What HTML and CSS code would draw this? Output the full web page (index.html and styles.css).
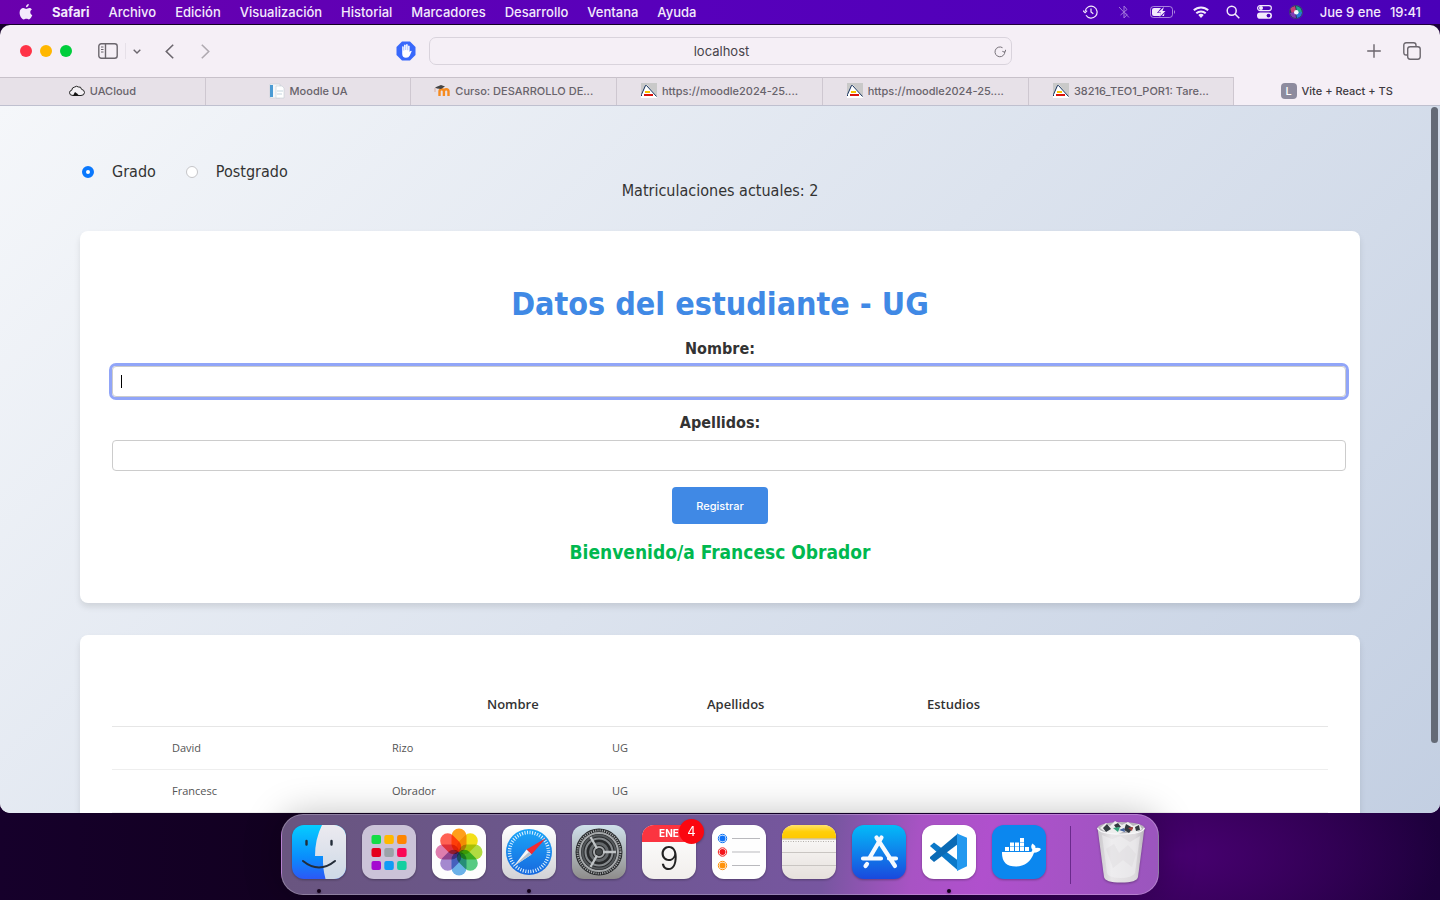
FILE: index.html
```html
<!DOCTYPE html>
<html lang="es">
<head>
<meta charset="utf-8">
<meta name="viewport" content="width=device-width, initial-scale=1">
<title>Vite + React + TS</title>
<link rel="stylesheet" href="styles.css">
</head>
<body class="desktop">
<svg class="defs" aria-hidden="true">
  <defs>
    <linearGradient id="finderBlue" x1="0" y1="0" x2="0" y2="1"><stop offset="0" stop-color="#05cdff"/><stop offset=".6" stop-color="#0a8dfc"/><stop offset="1" stop-color="#2c58f5"/></linearGradient>
    <linearGradient id="finderWhite" x1="0" y1="0" x2="0" y2="1"><stop offset="0" stop-color="#eceaf0"/><stop offset="1" stop-color="#cdd9e6"/></linearGradient>
    <linearGradient id="silver" x1="0" y1="0" x2="0" y2="1"><stop offset="0" stop-color="#fff"/><stop offset="1" stop-color="#d2d2d6"/></linearGradient>
    <linearGradient id="compass" x1="0" y1="0" x2="0" y2="1"><stop offset="0" stop-color="#1ba5f8"/><stop offset="1" stop-color="#1769df"/></linearGradient>
    <linearGradient id="prefs" x1="0" y1="0" x2="0" y2="1"><stop offset="0" stop-color="#cfe0ea"/><stop offset="1" stop-color="#8e8c8b"/></linearGradient>
    <linearGradient id="paper" x1="0" y1="0" x2="0" y2="1"><stop offset="0" stop-color="#fff"/><stop offset="1" stop-color="#e6e0dc"/></linearGradient>
    <linearGradient id="noteTop" x1="0" y1="0" x2="0" y2="1"><stop offset="0" stop-color="#ffe06a"/><stop offset=".5" stop-color="#ffcf08"/><stop offset="1" stop-color="#ffc800"/></linearGradient>
    <linearGradient id="store" x1="0" y1="0" x2="0" y2="1"><stop offset="0" stop-color="#03bbf8"/><stop offset="1" stop-color="#1a49dd"/></linearGradient>
    <linearGradient id="bin" x1="0" y1="0" x2="1" y2="0"><stop offset="0" stop-color="#c9c7cb"/><stop offset=".3" stop-color="#e8e6e8"/><stop offset=".8" stop-color="#dddadd"/><stop offset="1" stop-color="#b9b6bc"/></linearGradient>
    <clipPath id="tile"><rect width="54" height="54" rx="12"/></clipPath>
    <clipPath id="orb"><circle cx="7" cy="7" r="6.500"/></clipPath>
    <symbol id="ua" viewBox="0 0 16 16"><path fill="#c9c9c9" d="M0 0h16v15H0z"/><path fill="#fff" d="M5 2h1l10 12v1H0v-3z"/><path fill="none" stroke="#14305c" d="M.5 13V11.500L4.500 2.500H5.500L15.500 13.500"/><path fill="#f7c400" d="M4 8h5v2H4z"/><path fill="#d9140e" d="M3 11h9v2H3z"/></symbol>
  </defs>
</svg>

<header class="menubar">
  <nav class="menus" aria-label="Barra de menús">
    <button class="menu apple" aria-label="Apple"><svg width="14" height="16" viewBox="0 0 14 16"><path fill="currentColor" d="M9.800 0c.1 1.600-1.200 3.200-2.800 3.200C6.800 1.700 8.200.2 9.800 0zM12.900 5.600c-1 .6-1.600 1.500-1.600 2.600 0 1.300.8 2.400 2 2.900-.5 1.700-1.900 4.200-3.300 4.300-1 0-1.400-.6-2.600-.6s-1.700.6-2.600.6C2.900 15.500.6 11.700.6 8.700c0-3 1.900-4.600 3.700-4.600 1.200 0 2.200.8 2.900.8.700 0 1.800-.9 3.300-.9 1 0 1.900.6 2.400 1.600z"/></svg></button>
    <button class="menu app">Safari</button>
    <button class="menu">Archivo</button>
    <button class="menu">Edición</button>
    <button class="menu">Visualización</button>
    <button class="menu">Historial</button>
    <button class="menu">Marcadores</button>
    <button class="menu">Desarrollo</button>
    <button class="menu">Ventana</button>
    <button class="menu">Ayuda</button>
  </nav>
  <div class="status">
    <svg width="15" height="14" viewBox="0 0 15 14" fill="none" stroke="currentColor" stroke-width="1.200"><path d="M2.200 6A6 6 0 1 1 3 10.300M0 5.600l2.100 2 2-2M8 3.500V7l2.300 1.800"/></svg>
    <svg class="faint" width="18" height="14" viewBox="-3 0 18 14" fill="none" stroke="currentColor"><path d="M2.500 10L9 4.500 6 1v12l3-3.300-2-2M1 2l10 10.500"/></svg>
    <svg width="26" height="12" viewBox="0 0 26 12"><rect x=".5" y=".5" width="22" height="11" rx="3" fill="none" stroke="currentColor" opacity=".55"/><path fill="currentColor" opacity=".6" d="M24 4q2 2 0 4z"/><path fill="currentColor" d="M4 2h7L7 7h4l-1 3H4q-2 0-2-2V4q0-2 2-2zM14 1L8 6.500h3L9.500 11l6-6h-3zM14.500 7L12 10h2z"/></svg>
    <svg width="16" height="12" viewBox="0 0 16 12" fill="none" stroke="currentColor" stroke-width="2"><path d="M.8 4.300a10.500 10.500 0 0 1 14.400 0M3.300 7.200a7 7 0 0 1 9.400 0"/><path fill="currentColor" stroke="none" d="M5.300 9a4 4 0 0 1 5.400 0L8 12z"/></svg>
    <svg width="14" height="14" viewBox="0 0 14 14" fill="none" stroke="currentColor" stroke-width="1.500"><circle cx="5.700" cy="5.700" r="4.500"/><path d="M9 9l4.300 4.300"/></svg>
    <svg width="15" height="14" viewBox="0 0 15 14"><rect x=".6" y=".6" width="13.800" height="5" rx="2.500" fill="none" stroke="currentColor" stroke-width="1.200"/><circle cx="4" cy="3.100" r="2" fill="currentColor"/><rect y="7.500" width="15" height="6.300" rx="3.100" fill="currentColor"/><circle cx="11.500" cy="10.600" r="1.900" fill="#4c00b8"/></svg>
    <svg width="14" height="14" viewBox="0 0 14 14"><circle cx="7" cy="7" r="7" fill="#4a4584"/><g clip-path="url(#orb)"><path fill="#23345f" d="M0 0h14v14H0z"/><path fill="#c93c78" d="M1 3l5-2 1 5-4 3z"/><path fill="#1fa38e" d="M7 1q6 1 6 7l-5-1z"/><path fill="#2879d8" d="M13 7q0 5-5 6l-1-5z"/><path fill="#7d3bb5" d="M1 8l5-1 1 6q-5 0-6-5z"/></g><circle cx="7.300" cy="7.300" r="2.300" fill="#f0fbff"/></svg>
    <time class="clock"><span>Jue 9 ene</span><span>19:41</span></time>
  </div>
</header>

<section class="window" aria-label="Safari">
  <div class="toolbar">
    <div class="tools">
      <div class="lights"><button class="light red" aria-label="Cerrar"></button><button class="light amber" aria-label="Minimizar"></button><button class="light green" aria-label="Ampliar"></button></div>
      <div class="sidebar-tools">
        <button class="icon" aria-label="Barra lateral"><svg width="20" height="16" viewBox="0 0 20 16" fill="none" stroke="currentColor" stroke-width="1.400"><rect x=".8" y=".8" width="18.400" height="14.400" rx="2.500"/><path d="M7.500 1v14"/><path stroke-width="1" d="M3 4h2.500M3 6.500h2.500M3 9h2.500"/></svg></button>
        <button class="icon split" aria-label="Grupos de pestañas"><svg width="8" height="5" viewBox="0 0 8 5" fill="none" stroke="currentColor" stroke-width="1.400"><path d="M.7.700L4 4 7.300.700"/></svg></button>
      </div>
      <div class="history">
        <button class="icon" aria-label="Atrás"><svg width="9" height="15" viewBox="0 0 9 15" fill="none" stroke="currentColor" stroke-width="1.600"><path d="M8.200.8L1.300 7.500l6.900 6.700"/></svg></button>
        <button class="icon faint" aria-label="Adelante"><svg width="9" height="15" viewBox="0 0 9 15" fill="none" stroke="currentColor" stroke-width="1.600"><path d="M.8.800l6.900 6.700-6.900 6.700"/></svg></button>
      </div>
    </div>
    <div class="address-area">
      <button class="icon" aria-label="Bloqueador"><svg width="20" height="20" viewBox="0 0 20 20"><path fill="#3868fb" d="M6 .5h8L19.500 6v8L14 19.500H6L.5 14V6z"/><path fill="#fff" d="M6.200 5.500q.9-.8 1.500.2V9.500h.4V4q.8-1.200 1.600 0v5h.4V3.500q.8-1.200 1.600 0V9.200h.4V5q.8-1 1.500 0v6l.8-1q1-.6 1.300.2L13.800 14.500q-1 2.200-3.800 2.200-3.800 0-3.800-4z"/></svg></button>
      <div class="address">
        <input class="url" type="text" value="localhost" aria-label="Dirección">
        <button class="reload" aria-label="Recargar"><svg width="12" height="13" viewBox="0 0 12 13" fill="none" stroke="#77727a"><path d="M10.800 6.500A4.900 4.900 0 1 1 8.500 2.700M8.300 6.300l2.500 1 1-2.600"/></svg></button>
      </div>
    </div>
    <div class="actions">
      <button class="icon" aria-label="Nueva pestaña"><svg width="14" height="14" viewBox="0 0 14 14" fill="none" stroke="currentColor" stroke-width="1.400"><path d="M7 .2v13.600M.2 7h13.600"/></svg></button>
      <button class="icon" aria-label="Vista de pestañas"><svg width="18" height="18" viewBox="0 0 18 18" fill="none" stroke="currentColor" stroke-width="1.400"><path d="M4.300 13H3.200Q.8 13 .8 10.600V3.200Q.8.800 3.200.800h7.400Q13 .8 13 3.200v1.100"/><rect x="4.700" y="4.700" width="12.500" height="12.500" rx="2.400"/></svg></button>
    </div>
  </div>

  <div class="tabs" role="tablist">
    <button class="tab" role="tab"><svg width="16" height="16" viewBox="0 0 16 16"><path fill="#fff" fill-opacity=".5" stroke="#222" d="M4 12.500q-3.500 0-3.500-2.700 0-2.300 2.200-2.500.2-3 3-3.300Q7.500 2.500 9.500 4q2.500-.7 3 2.300 2.800.4 3 3.200-.2 3-3.500 3z"/><path fill="#111" d="M4 12.500L6 9l2 1.500 2 2z"/></svg><span>UACloud</span></button>
    <button class="tab" role="tab"><svg width="16" height="16" viewBox="0 0 16 16"><path fill="#f5f7f9" stroke="#c5cdd4" stroke-width=".6" d="M1 1h10v14H1z"/><path fill="#4a9bd4" d="M1 2h3v12H1z"/><path fill="#fff" stroke="#c5cdd4" stroke-width=".6" d="M7 3h6l2 2v10H7z"/><path stroke="#c5d5df" d="M8 8h6M8 11h5"/></svg><span>Moodle UA</span></button>
    <button class="tab" role="tab"><svg width="16" height="16" viewBox="0 0 16 16"><path fill="none" stroke="#f68b1f" stroke-width="2.400" d="M5.500 13V8.500q0-2.300 2.200-2.300t2.200 2.300V13M9.900 8.500q0-2.300 2.300-2.300t2.300 2.300V13"/><path fill="#444" d="M1 4.500L7 2l4 1.500-4 2.500-4-.5z"/><path stroke="#d9a08a" stroke-width=".8" d="M1 5v4"/></svg><span>Curso: DESARROLLO DE...</span></button>
    <button class="tab" role="tab"><svg width="16" height="16"><use href="#ua"/></svg><span>https://moodle2024-25....</span></button>
    <button class="tab" role="tab"><svg width="16" height="16"><use href="#ua"/></svg><span>https://moodle2024-25....</span></button>
    <button class="tab" role="tab"><svg width="16" height="16"><use href="#ua"/></svg><span>38216_TEO1_POR1: Tare...</span></button>
    <button class="tab current" role="tab" aria-selected="true"><i class="letter">L</i><span>Vite + React + TS</span></button>
  </div>

  <div class="viewport">
    <main class="page">
      <div class="studies" role="radiogroup" aria-label="Estudios">
        <label class="study"><input class="radio" type="radio" name="estudios" checked><span>Grado</span></label>
        <label class="study"><input class="radio" type="radio" name="estudios"><span>Postgrado</span></label>
      </div>
      <p class="count">Matriculaciones actuales: 2</p>

      <form class="card form">
        <h1 class="title">Datos del estudiante - UG</h1>
        <label class="label" for="nombre">Nombre:</label>
        <input class="field active" id="nombre" type="text">
        <label class="label" for="apellidos">Apellidos:</label>
        <input class="field" id="apellidos" type="text">
        <button class="submit" type="button">Registrar</button>
        <p class="welcome">Bienvenido/a Francesc Obrador</p>
      </form>

      <div class="card">
        <table class="students">
          <thead><tr><th>Nombre</th><th>Apellidos</th><th>Estudios</th></tr></thead>
          <tbody>
            <tr><td>David</td><td>Rizo</td><td>UG</td></tr>
            <tr><td>Francesc</td><td>Obrador</td><td>UG</td></tr>
          </tbody>
        </table>
      </div>
    </main>
    <div class="scrollbar"></div>
  </div>
</section>

<footer class="dock-area">
  <nav class="dock" aria-label="Dock">
    <button class="dock-item running" aria-label="Finder"><svg width="54" height="54" viewBox="0 0 54 54"><g clip-path="url(#tile)"><path fill="url(#finderBlue)" d="M0 0h54v54H0z"/><path fill="url(#finderWhite)" d="M30 0Q23 14 23 31h8q-.5 12 2.500 23H54V0z"/></g><path stroke="#222c38" stroke-width="2.400" stroke-linecap="round" d="M14.500 16v3.500M39.500 16v3.500"/><path fill="none" stroke="#222c38" stroke-width="2" stroke-linecap="round" d="M11 36q16 13 32 0"/></svg></button>
    <button class="dock-item" aria-label="Launchpad"><svg width="54" height="54" viewBox="0 0 54 54"><rect width="54" height="54" rx="12" fill="#cbc3d8"/><g><rect x="9.500" y="10" width="9.500" height="9" rx="2" fill="#14dc46"/><rect x="22.300" y="10" width="9.500" height="9" rx="2" fill="#ffb800"/><rect x="35.100" y="10" width="9.500" height="9" rx="2" fill="#ff8500"/><rect x="9.500" y="23" width="9.500" height="9" rx="2" fill="#e4001c"/><rect x="22.300" y="23" width="9.500" height="9" rx="2" fill="#9ba2a8"/><rect x="35.100" y="23" width="9.500" height="9" rx="2" fill="#fa0756"/><rect x="9.500" y="36" width="9.500" height="9" rx="2" fill="#a40bd0"/><rect x="22.300" y="36" width="9.500" height="9" rx="2" fill="#119bf5"/><rect x="35.100" y="36" width="9.500" height="9" rx="2" fill="#15cfa0"/></g></svg></button>
    <button class="dock-item" aria-label="Fotos"><svg width="54" height="54" viewBox="0 0 54 54"><rect width="54" height="54" rx="12" fill="#fdfdfd"/><g class="petals"><rect x="19.500" y="3.500" width="15" height="23.500" rx="7.500" fill="#ff9500"/><rect x="19.500" y="3.500" width="15" height="23.500" rx="7.500" fill="#f2dc00" transform="rotate(45 27 27)"/><rect x="19.500" y="3.500" width="15" height="23.500" rx="7.500" fill="#a9d72c" transform="rotate(90 27 27)"/><rect x="19.500" y="3.500" width="15" height="23.500" rx="7.500" fill="#44c574" transform="rotate(135 27 27)"/><rect x="19.500" y="3.500" width="15" height="23.500" rx="7.500" fill="#5aa9e6" transform="rotate(180 27 27)"/><rect x="19.500" y="3.500" width="15" height="23.500" rx="7.500" fill="#9a7cca" transform="rotate(225 27 27)"/><rect x="19.500" y="3.500" width="15" height="23.500" rx="7.500" fill="#dc6fa5" transform="rotate(270 27 27)"/><rect x="19.500" y="3.500" width="15" height="23.500" rx="7.500" fill="#ff5040" transform="rotate(315 27 27)"/></g></svg></button>
    <button class="dock-item running" aria-label="Safari"><svg width="54" height="54" viewBox="0 0 54 54"><rect width="54" height="54" rx="12" fill="url(#silver)"/><circle cx="27" cy="27" r="23" fill="url(#compass)"/><circle cx="27" cy="27" r="19.500" fill="none" stroke="#e0f3ff" stroke-width="3.500" stroke-dasharray="1 1.552"/><path fill="#f22a32" d="M44 13L24.500 24.500l5 5z"/><path fill="#f7f7f7" d="M12 41l12.500-16.500 5 5z"/><path fill="#b9c2cb" d="M12 41l15-14 2.500 2.500z"/></svg></button>
    <button class="dock-item" aria-label="Ajustes del Sistema"><svg width="54" height="54" viewBox="0 0 54 54"><rect width="54" height="54" rx="12" fill="url(#prefs)"/><circle cx="27" cy="27" r="23.500" fill="#27292b"/><g fill="none" stroke="#a5a8aa"><circle cx="27" cy="27" r="21.500" stroke-width="2" stroke-dasharray="1.100 1.151"/><circle cx="27" cy="27" r="19" stroke-width="2"/><circle cx="27" cy="27" r="16.500" stroke="#55595c" stroke-width="2"/><circle cx="27" cy="27" r="13.500" stroke="#85898c" stroke-width="2"/><circle cx="27" cy="27" r="8.500" stroke="#63676a" stroke-width="3"/><circle cx="27" cy="27" r="5" stroke-width="2"/><path stroke="#c0c4c6" stroke-width="2.300" d="M31 27h13M25 23.500L18.500 12M25 30.500L18.500 42"/></g><circle cx="27" cy="27" r="3" fill="#44484a"/></svg></button>
    <button class="dock-item calendar" aria-label="Calendario, 4 avisos"><span class="month">ENE</span><span class="day">9</span><span class="badge">4</span></button>
    <button class="dock-item" aria-label="Recordatorios"><svg width="54" height="54" viewBox="0 0 54 54"><rect width="54" height="54" rx="12" fill="#fefefe"/><g fill="none"><circle cx="10.500" cy="13.500" r="4.200" stroke="#1277f5"/><circle cx="10.500" cy="27" r="4.200" stroke="#f52222"/><circle cx="10.500" cy="40.500" r="4.200" stroke="#ff930a"/></g><circle cx="10.500" cy="13.500" r="3" fill="#0f72f7"/><circle cx="10.500" cy="27" r="3" fill="#f4151c"/><circle cx="10.500" cy="40.500" r="3" fill="#ff9209"/><path stroke="#b9b9bd" d="M20 13.500h28M20 27h28M20 40.500h28"/></svg></button>
    <button class="dock-item" aria-label="Notas"><svg width="54" height="54" viewBox="0 0 54 54"><g clip-path="url(#tile)"><path fill="url(#paper)" d="M0 0h54v54H0z"/><path fill="url(#noteTop)" d="M0 0h54v13.500H0z"/><path stroke="#b9aa80" d="M0 14h54"/><path stroke="#b4b0ac" stroke-dasharray="1 1.500" d="M1 16.500h52"/><path stroke="#c9c5c2" d="M0 27.500h54M0 40.500h54"/></g></svg></button>
    <button class="dock-item" aria-label="App Store"><svg width="54" height="54" viewBox="0 0 54 54"><rect width="54" height="54" rx="12" fill="url(#store)"/><g stroke="#f5faff" stroke-width="4.200" stroke-linecap="round"><path d="M29.500 12.500L17.500 33M24.500 12.500L43 41M11 33.500h18M37 33.500h7M15 39l-1.500 2"/></g></svg></button>
    <button class="dock-item running" aria-label="Visual Studio Code"><svg width="54" height="54" viewBox="0 0 54 54"><rect width="54" height="54" rx="12" fill="#fff"/><path fill="#0a78c9" d="M8 21l4-3.500L36 35.500v10L8.500 21.500z"/><path fill="#0a6ab5" d="M8 33.500l4 3.500 24-18V8.500L8 32z"/><path fill="#2399ef" d="M35 8.500l10 4.300v28.500L35 46z"/></svg></button>
    <button class="dock-item" aria-label="Docker"><svg width="54" height="54" viewBox="0 0 54 54"><rect width="54" height="54" rx="12" fill="#0b87ef"/><path fill="#fff" d="M10 27h28.500q2-.2 1.800-2.500-2.300-3 .2-6 3 1.800 3 4.500 3.500-.7 5.500 1-2.500 3.800-7 3.800Q37 41.500 24 41.500 9.500 41.500 10 27z"/><path fill="#fff" d="M13 22h4v4h-4zM18 22h4v4h-4zM23 22h4v4h-4zM28 22h4v4h-4zM33 22h4v4h-4zM18 17.500h4v4h-4zM23 17.500h4v4h-4zM28 17.500h4v4h-4zM28 13h4v4h-4z"/></svg></button>
    <span class="divider"></span>
    <button class="dock-item trash" aria-label="Papelera"><svg width="48" height="62" viewBox="0 0 48 62"><path fill="url(#bin)" d="M.5 6.500L7 56q1 5.500 17 5.500T41 56L47.500 6.500z"/><path fill="#f4f3f5" opacity=".5" d="M5 14l10 4 8-3 10 6 10-6-5 37q-3 5-14 5-13 0-14-5z"/><path fill="#d4d1d5" opacity=".25" d="M9 28l8-5 5 9 9-8 8 9-4 13-9-7-10 8z"/><ellipse cx="24" cy="7" rx="23.500" ry="6" fill="#b8b6bb"/><path fill="#eee" d="M3 7l6-5 4 3 5-5 7 4 6-3 5 4 6-2 3 5-8 5-9-3-9 4-9-2z"/><path fill="#333a40" d="M6 7l4-4 4 5-5 3zM17 4l4-2 3 4-5 1zM29 3l7 4-4 5-5-3zM38 6l4-2 1 5-4 1z"/><path fill="#34a37c" d="M16 7l7-1-2 5z"/><path fill="#aa3e3a" d="M31 7l5-1-1 4z"/><path fill="#4563a0" d="M22 9l5-2 1 4z"/><path fill="none" stroke="#f7f7f9" stroke-width="1.200" d="M.6 7q2 6 23.400 6T47.400 7"/></svg></button>
  </nav>
</footer>
</body>
</html>
```
FILE: styles.css
```css
* { box-sizing: border-box; }

button, input { font: inherit; color: inherit; }

button {
  margin: 0;
  padding: 0;
  border: 0;
  background: none;
}

svg { display: block; flex: none; }

.defs { position: absolute; width: 0; height: 0; }

.desktop {
  display: flex;
  flex-direction: column;
  height: 100vh;
  margin: 0;
  overflow: hidden;
  font-family: Inter, "Liberation Sans", sans-serif;
  background:
    radial-gradient(ellipse 260px 120px at 82% 95%, #470070 0%, rgba(71, 0, 112, 0) 100%),
    linear-gradient(90deg, #16002b 0%, #120020 20%, #14002c 60%, #2b0049 80%, #1d003c 100%);
}

/* Menu bar */
.menubar {
  display: flex;
  justify-content: space-between;
  align-items: center;
  height: 24px;
  margin-bottom: 1px;
  padding: 0 19px;
  color: #f3eafc;
  font-size: 13px;
  font-weight: 500;
  background: linear-gradient(90deg, #6a00ad 0%, #5800bb 45%, #4a00b8 100%);
}

.menus { display: flex; align-items: center; gap: 19px; }
.menu { line-height: 20px; }
.app { font-weight: 700; }
.status { display: flex; align-items: center; gap: 17px; }
.clock { display: flex; gap: 9px; }
.faint { opacity: 0.5; }

/* Browser window */
.window {
  display: flex;
  flex: 1;
  flex-direction: column;
  min-height: 0;
  overflow: hidden;
  border-radius: 10px;
  background: #f5eff6;
}

.toolbar {
  display: grid;
  grid-template-columns: 1fr 648px 1fr;
  align-items: center;
  height: 52px;
  color: #6b666d;
}

.tools { display: flex; align-items: center; padding-left: 20px; }
.lights { display: flex; gap: 8px; margin-right: 26px; }
.light { width: 12px; height: 12px; border-radius: 50%; }
.red { background: #ff3347; }
.amber { background: #ffb700; }
.green { background: #00ce3c; }
.icon { display: flex; align-items: center; justify-content: center; }
.sidebar-tools { display: flex; gap: 7px; margin-right: 24px; }
.split { padding-left: 7px; border-left: 1px solid #e6e0e8; }
.history { display: flex; gap: 27px; }

.address-area { display: flex; align-items: center; gap: 13px; padding-right: 32px; }

.address {
  display: flex;
  flex: 1;
  align-items: center;
  height: 28px;
  padding: 0 5px 0 19px;
  border: 1px solid #d9d3dc;
  border-radius: 7px;
}

.url {
  flex: 1;
  min-width: 0;
  padding: 0;
  border: 0;
  outline: 0;
  color: #47434a;
  font-size: 13px;
  text-align: center;
  background: none;
}

.actions { display: flex; justify-content: flex-end; gap: 22px; padding-right: 19px; }

.tabs { display: flex; height: 29px; border-bottom: 1px solid #bfc0cf; }

.tab {
  display: flex;
  flex: 1;
  align-items: center;
  justify-content: center;
  gap: 5px;
  min-width: 0;
  padding-bottom: 1px;
  overflow: hidden;
  border-top: 1px solid #c8c1ca;
  border-right: 1px solid #cec7d0;
  color: #68636b;
  font-size: 11px;
  font-weight: 500;
  white-space: nowrap;
  background: #e7e1e8;
}

.current { border-color: transparent; color: #3e3a41; background: none; }

.letter {
  width: 16px;
  height: 16px;
  border-radius: 4px;
  color: #fff;
  font-style: normal;
  line-height: 16px;
  background: #8d8b9e;
}

/* Web page */
.viewport {
  position: relative;
  flex: 1;
  min-height: 0;
  overflow: hidden;
  background: linear-gradient(135deg, #f5f7fa 0%, #c3cfe2 100%);
}

.scrollbar {
  position: absolute;
  top: 1px;
  right: 2px;
  width: 7px;
  height: 90%;
  border-radius: 4px;
  background: #646a76;
}

.page {
  max-width: 1440px;
  margin: 0 auto;
  padding: 56px 80px 32px;
  color: #333;
  font-family: "DejaVu Sans Condensed", "Noto Sans", sans-serif;
  font-size: 16px;
}

.studies { display: flex; gap: 30px; line-height: 20px; }
.study { display: flex; align-items: center; gap: 18px; padding-left: 2px; }
.study + .study { padding-left: 0; }

.radio {
  width: 12px;
  height: 12px;
  margin: 0;
  border: 1px solid #c5c5c8;
  border-radius: 50%;
  background: #fff;
  appearance: none;
}

.radio:checked { border: 4px solid #0a78fd; }

.count { margin: 0 0 31px; line-height: 18px; text-align: center; }

.card {
  margin-bottom: 32px;
  padding: 32px;
  border-radius: 8px;
  background: #fff;
  box-shadow: 0 4px 6px rgba(0, 0, 0, 0.1);
}

.form { display: flex; flex-direction: column; align-items: center; }

.title {
  margin: 21px 0 15px;
  color: #4089e5;
  font-size: 32px;
  line-height: 40px;
  white-space: nowrap;
}

.label { margin-bottom: 7px; font-weight: 700; line-height: 20px; }

.field {
  box-sizing: content-box;
  align-self: flex-start;
  width: 100%;
  height: 13px;
  margin: 0 0 16px;
  padding: 8px;
  border: 1px solid #ccc;
  border-radius: 4px;
  font-size: 13px;
  background: #fff;
}

.active {
  outline: 3px solid #91a5f8;
  caret-color: transparent;
  background: linear-gradient(#000, #000) 8px 50% / 1px 13px no-repeat #fff;
}

.submit {
  height: 37px;
  margin-bottom: 16px;
  padding: 0 24px;
  border-radius: 4px;
  color: #fff;
  font-family: Inter, sans-serif;
  font-size: 11px;
  font-weight: 500;
  background: #4089e5;
}

.welcome {
  margin: 0 0 7px;
  color: #00b84f;
  font-size: 19px;
  font-weight: 700;
  line-height: 24px;
}

.students {
  display: block;
  font-family: "Open Sans", "Noto Sans", sans-serif;
  font-size: 11px;
}

.students thead, .students tbody { display: block; }
.students tr { display: flex; height: 43px; align-items: center; border-bottom: 1px solid #eee; }
.students thead tr { justify-content: center; height: 60px; padding-top: 15px; border-color: #e6e6e6; }
.students tbody tr { padding: 0 0 2px 60px; }
.students th, .students td { flex: 0 0 220px; padding: 0; text-align: left; }
.students th { padding-left: 97px; font-size: 13px; font-weight: 600; }
.students td { color: #555; }

/* Dock */
.dock-area { display: flex; justify-content: center; padding: 1px 0 5px; }

.dock {
  position: relative;
  display: flex;
  align-items: center;
  gap: 16px;
  height: 81px;
  padding: 0 13px 6px 10px;
  border: 1px solid rgba(255, 255, 255, 0.25);
  border-radius: 22px;
  background: linear-gradient(100deg, #69557f 0%, #6c578f 35%, #7756a0 62%, #a853c4 72%, #b050cd 80%, #9a56bd 100%);
  box-shadow: 0 0 36px rgba(0, 0, 0, 0.25);
}

.dock-item { position: relative; flex: none; filter: drop-shadow(0 1px 1px rgba(0, 0, 0, 0.3)); }

.running::after {
  position: absolute;
  bottom: -14px;
  left: 50%;
  width: 4px;
  height: 4px;
  margin-left: -2px;
  border-radius: 50%;
  background: #120018;
  content: "";
}

.petals { isolation: isolate; }
.petals rect { mix-blend-mode: multiply; opacity: 0.9; }

.calendar {
  display: flex;
  flex-direction: column;
  width: 54px;
  height: 54px;
  border-radius: 12px;
  background: linear-gradient(#fff, #f1eeec);
}

.month {
  width: 100%;
  border-radius: 12px 12px 0 0;
  color: #fff;
  font-size: 10px;
  font-weight: 700;
  line-height: 17px;
  background: #fb3440;
}

.day { width: 100%; color: #222; font-size: 32px; font-weight: 300; line-height: 34px; }

.badge {
  position: absolute;
  top: -6px;
  right: -8px;
  width: 25px;
  height: 25px;
  border-radius: 50%;
  color: #fff;
  font-size: 13px;
  line-height: 25px;
  background: #fb0710;
}

.divider { align-self: center; width: 1px; height: 58px; margin: 6px 10px 0 8px; background: #6a2a8c; }
```
